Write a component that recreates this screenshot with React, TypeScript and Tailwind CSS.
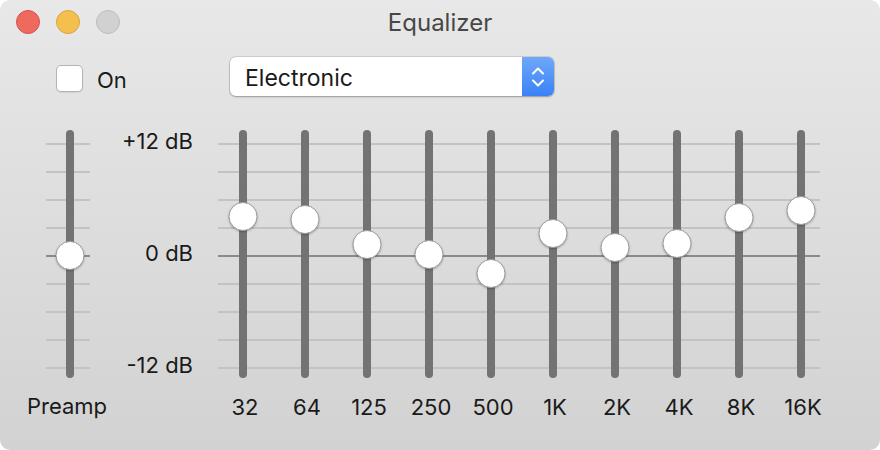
import React from 'react';

type Band = { label: string; y: number };

// knob centre, px from the top of the track (0 dB = 126)
const bands: Band[] = [
  { label: '32', y: 86 },
  { label: '64', y: 89.5 },
  { label: '125', y: 114 },
  { label: '250', y: 124 },
  { label: '500', y: 143.5 },
  { label: '1K', y: 103.5 },
  { label: '2K', y: 117.5 },
  { label: '4K', y: 113 },
  { label: '8K', y: 87.5 },
  { label: '16K', y: 80 },
];

const gridLines = [0, 1, 2, 3, 4, 5, 6, 7, 8];

const GridLines: React.FC = () => (
  <div className="flex flex-col gap-[26px] pt-[13px]">
    {gridLines.map((i) => (
      <div key={i} className={`h-[2px] w-full ${i === 4 ? 'bg-[#8a8a8a]' : 'bg-[#c3c3c3]'}`} />
    ))}
  </div>
);

const Knob: React.FC<{ y: number }> = ({ y }) => (
  <div
    className="absolute left-1/2 -translate-x-1/2 w-[29px] h-[29px] rounded-full bg-white border border-[#9b9b9b] shadow-[0_1px_2px_rgba(0,0,0,0.25)]"
    style={{ top: y - 14.5 }}
  />
);

const Track: React.FC<{ y: number }> = ({ y }) => (
  <div className="relative w-[8px] h-[248px] rounded-full bg-[#737373]">
    <Knob y={y} />
  </div>
);

export default function App() {
  return (
    <div className="w-[880px] h-[450px] bg-white">
      <div className="h-full rounded-[10px] overflow-hidden bg-gradient-to-b from-[#e8e8e8] to-[#d2d2d2] font-['Inter','Liberation_Sans',sans-serif] text-[#1a1a1a]">
        {/* title bar */}
        <div className="grid grid-cols-[1fr_auto_1fr] items-center h-[44px]">
          <div className="flex items-center gap-[16px] pl-[16px]">
            <div className="w-[24px] h-[24px] rounded-full bg-[#ee6a5f] border border-[#d5544a]" />
            <div className="w-[24px] h-[24px] rounded-full bg-[#f5bf4f] border border-[#d9a441]" />
            <div className="w-[24px] h-[24px] rounded-full bg-[#d1d1d1] border border-[#bdbdbd]" />
          </div>
          <div className="text-[24px] leading-[28px] text-[#474747] pt-[1px]">Equalizer</div>
          <div />
        </div>

        {/* controls row */}
        <div className="flex items-center mt-[13px] h-[39px]">
          <div className="flex items-center w-[230px] pl-[56px] gap-[14px]">
            <div className="w-[27px] h-[27px] mt-[4px] rounded-[5px] bg-white border border-[#b4b4b4] shadow-[0_1px_1px_rgba(0,0,0,0.08)]" />
            <span className="text-[22px] leading-[26px] mt-[6px]">On</span>
          </div>
          <div className="flex w-[324px] h-[39px] rounded-[6px] bg-white shadow-[0_0_0_1px_rgba(0,0,0,0.1),0_1px_2px_rgba(0,0,0,0.25)]">
            <div className="flex-1 flex items-center pl-[15px] pt-[3px] text-[23px]">Electronic</div>
            <div className="w-[32px] h-full rounded-r-[6px] bg-gradient-to-b from-[#6ea8f9] to-[#3a81f6] flex items-center justify-center">
              <svg width="14" height="24" viewBox="0 0 14 24" fill="none" stroke="white" strokeWidth="2" strokeLinecap="round" strokeLinejoin="round">
                <path d="M2 8.5 L7 3.5 L12 8.5" />
                <path d="M2 15.5 L7 20.5 L12 15.5" />
              </svg>
            </div>
          </div>
        </div>

        {/* sliders */}
        <div className="flex items-start mt-[34px]">
          {/* preamp */}
          <div className="flex flex-col items-center w-[44px] ml-[46px]">
            <div className="relative w-full h-[248px]">
              <div className="absolute inset-0">
                <GridLines />
              </div>
              <div className="relative flex justify-center pl-[4px]">
                <Track y={125} />
              </div>
            </div>
            <div className="mt-[16px] text-[22px] leading-[24px] whitespace-nowrap pr-[2px]">Preamp</div>
          </div>

          {/* dB scale */}
          <div className="flex flex-col items-end justify-between w-[103px] h-[248px] -mt-[1px] text-[22px] leading-[24px]">
            <span>+12 dB</span>
            <span>0 dB</span>
            <span>-12 dB</span>
          </div>

          {/* bands */}
          <div className="relative flex ml-[19px]">
            <div className="absolute top-0 left-[6px] right-[12px] h-[248px]">
              <GridLines />
            </div>
            {bands.map((b) => (
              <div key={b.label} className="relative flex flex-col items-center w-[62px]">
                <Track y={b.y} />
                <div className="mt-[17px] text-[22px] leading-[24px] pl-[4px]">{b.label}</div>
              </div>
            ))}
          </div>
        </div>
      </div>
    </div>
  );
}
